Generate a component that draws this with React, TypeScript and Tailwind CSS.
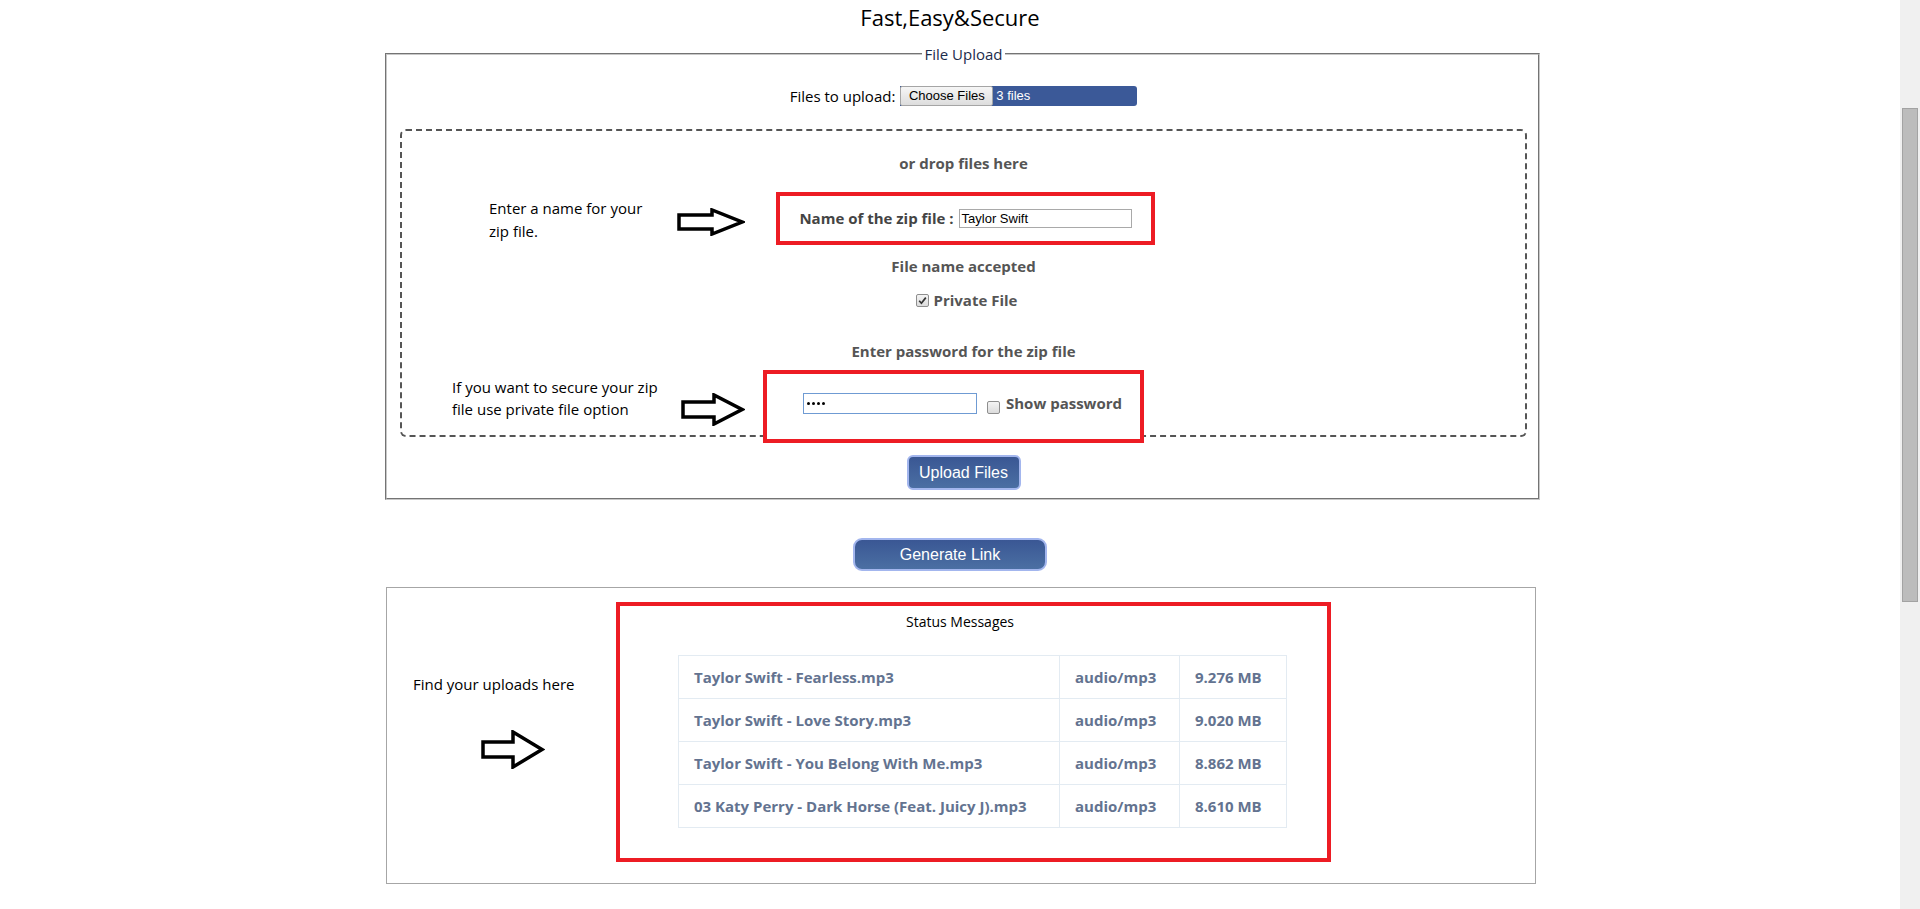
import React from "react";

const arial = "font-['Liberation_Sans',Arial,sans-serif]";

function Arrow({ w, h, points }: { w: number; h: number; points: string }) {
  return (
    <svg width={w} height={h} viewBox={`0 0 ${w} ${h}`} className="block shrink-0">
      <polygon points={points} fill="white" stroke="black" strokeWidth="3.5" strokeLinejoin="miter" />
    </svg>
  );
}

function Check({ checked }: { checked?: boolean }) {
  return (
    <span className="inline-flex h-[13px] w-[13px] shrink-0 items-center justify-center rounded-[2px] border border-[#8e8e8e] bg-gradient-to-b from-[#f4f4f4] to-[#dcdcdc]">
      {checked && (
        <svg width="9" height="9" viewBox="0 0 9 9">
          <path d="M1.2 4.8 L3.4 7.2 L7.8 1.6" fill="none" stroke="#333" strokeWidth="1.7" />
        </svg>
      )}
    </span>
  );
}

const uploads = [
  { name: "Taylor Swift - Fearless.mp3", type: "audio/mp3", size: "9.276 MB" },
  { name: "Taylor Swift - Love Story.mp3", type: "audio/mp3", size: "9.020 MB" },
  { name: "Taylor Swift - You Belong With Me.mp3", type: "audio/mp3", size: "8.862 MB" },
  { name: "03 Katy Perry - Dark Horse (Feat. Juicy J).mp3", type: "audio/mp3", size: "8.610 MB" },
];

export default function App() {
  return (
    <div className="flex h-[909px] w-full overflow-hidden bg-white font-['Open_Sans',sans-serif] text-[15px] text-black">
      <div className="flex flex-1 flex-col">
        {/* TITLE */}
        <h1 className="h-[34px] text-center text-[22px] leading-[34px]">Fast,Easy&amp;Secure</h1>

        {/* FILE UPLOAD FIELDSET */}
        <fieldset className="ml-[385px] mt-[10px] w-[1155px] border-2 border-[#c8c8c8] pb-[8px] pl-[13px] pr-[11px] [border-style:groove]">
          <legend className="mx-auto px-[2px] text-[15px] leading-[20px] text-[#1c2c4c]">File Upload</legend>

          <div className="mt-[22px] flex h-[20px] items-center justify-center">
            <span className="mr-[5px] text-[15px]">Files to upload:</span>
            <div className={`flex h-[20px] w-[237px] rounded-r-[3px] bg-[#3b5998] text-[13px] ${arial}`}>
              <span className="flex h-full w-[93px] items-center justify-center rounded-[2px] border border-[#a5a5a5] bg-gradient-to-b from-[#f6f6f6] to-[#dddddd] text-black">
                Choose Files
              </span>
              <span className="flex items-center pl-[3px] text-white">3 files</span>
            </div>
          </div>

          {/* DROP ZONE */}
          <div className="mt-[23px] flex flex-col rounded-[6px] border-2 border-dashed border-[#555] pt-[22px] text-[#555]">
            <p className="text-center font-bold leading-[20px]">or drop files here</p>

            <div className="mt-[19px] flex items-start">
              <p className="ml-[87px] mt-[5px] w-[188px] leading-[23px] text-black">
                Enter a name for your
                <br />
                zip file.
              </p>
              <div className="mt-[16px]">
                <Arrow w={68} h={28} points="2,7 35,7 35,2 65,14 35,26 35,21 2,21" />
              </div>
              <div className="ml-[31px] flex h-[53px] w-[379px] items-center justify-center border-4 border-[#ed1c24] bg-white">
                <span className="font-bold text-[#444]">Name of the zip file :</span>
                <span className={`ml-[5px] flex h-[19px] w-[173px] items-center border border-[#a9a9a9] pl-[2px] text-[13px] text-black ${arial}`}>
                  Taylor Swift
                </span>
              </div>
            </div>

            <p className="mt-[11px] text-center font-bold leading-[20px]">File name accepted</p>

            <div className="mt-[14px] flex h-[20px] items-center justify-center gap-[5px] pl-[6px]">
              <Check checked />
              <span className="font-bold">Private File</span>
            </div>

            <p className="mt-[31px] text-center font-bold leading-[20px]">Enter password for the zip file</p>

            <div className="-mb-[8px] mt-[9px] flex items-start">
              <p className="ml-[50px] mt-[6px] w-[229px] leading-[22px] text-black">
                If you want to secure your zip
                <br />
                file use private file option
              </p>
              <div className="mt-[23px]">
                <Arrow w={64} h={33} points="2,9 33,9 33,2 61,16.5 33,31 33,24 2,24" />
              </div>
              <div className="relative ml-[18px] flex h-[73px] w-[381px] items-start border-4 border-[#ed1c24] bg-white pl-[36px] pt-[19px]">
                <span className="flex h-[21px] w-[174px] items-center gap-[2px] border border-[#6f9bd3] pl-[3px]">
                  <span className="h-[3px] w-[3px] rounded-full bg-black" />
                  <span className="h-[3px] w-[3px] rounded-full bg-black" />
                  <span className="h-[3px] w-[3px] rounded-full bg-black" />
                  <span className="h-[3px] w-[3px] rounded-full bg-black" />
                </span>
                <span className="ml-[10px] mt-[4px]">
                  <Check />
                </span>
                <span className="ml-[6px] font-bold leading-[21px]">Show password</span>
              </div>
            </div>
          </div>

          <div className="mt-[18px] flex justify-center">
            <button className={`h-[35px] w-[114px] rounded-[6px] border-2 border-[#a3b6ee] bg-gradient-to-b from-[#3a5794] to-[#4b6fa3] text-[16px] text-white ${arial}`}>
              Upload Files
            </button>
          </div>
        </fieldset>

        {/* GENERATE LINK */}
        <div className="mt-[38px] flex justify-center">
          <button className={`h-[33px] w-[194px] rounded-[9px] border-2 border-[#a3b6ee] bg-gradient-to-b from-[#3a5794] to-[#4b6fa3] text-[16px] text-white ${arial}`}>
            Generate Link
          </button>
        </div>

        {/* STATUS BOX */}
        <div className="ml-[386px] mt-[16px] flex h-[297px] w-[1150px] border border-[#a6a6a6] pt-[14px]">
          <div className="flex w-[229px] flex-col pl-[26px]">
            <p className="mt-[72px] leading-[20px]">Find your uploads here</p>
            <div className="ml-[68px] mt-[36px]">
              <Arrow w={64} h={39} points="2,12 32,12 32,2 61,19.5 32,37 32,27 2,27" />
            </div>
          </div>
          <div className="flex h-[260px] w-[715px] flex-col border-4 border-[#ed1c24]">
            <p className="pr-[27px] pt-[6px] text-center text-[14px] leading-[20px]">Status Messages</p>
            <table className="ml-[58px] mt-[23px] w-[609px] border-collapse text-[15px] font-bold text-[#637390]">
              <tbody>
                {uploads.map((u) => (
                  <tr key={u.name} className="h-[43px]">
                    <td className="w-[381px] border border-[#e3ebf2] pl-[15px]">{u.name}</td>
                    <td className="w-[120px] border border-[#e3ebf2] pl-[15px]">{u.type}</td>
                    <td className="border border-[#e3ebf2] pl-[15px]">{u.size}</td>
                  </tr>
                ))}
              </tbody>
            </table>
          </div>
        </div>
      </div>

      {/* SCROLLBAR */}
      <div className="flex w-[20px] flex-col bg-[#f0f0f0] pt-[108px]">
        <div className="mx-auto h-[494px] w-[16px] border border-[#a3a3a3] bg-[#bcbcbc]" />
      </div>
    </div>
  );
}
